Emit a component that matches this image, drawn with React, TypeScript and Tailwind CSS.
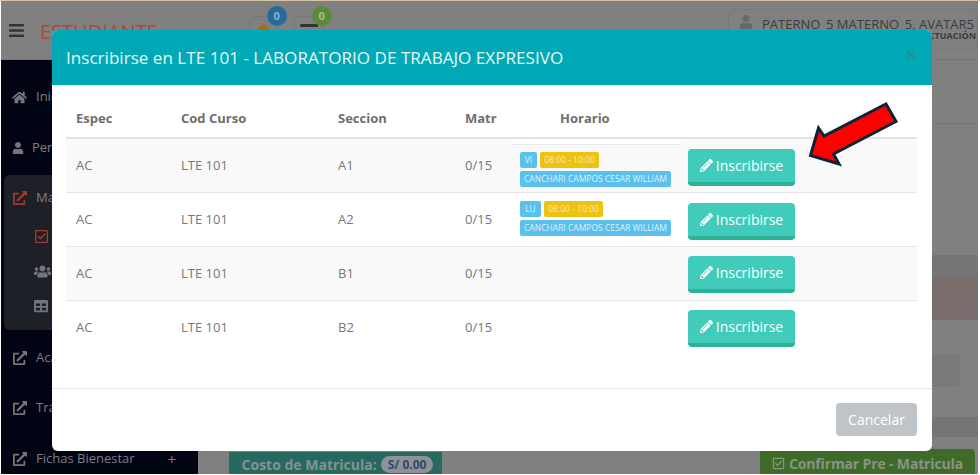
import React from "react";
import {
  FaBars,
  FaBell,
  FaCreditCard,
  FaHome,
  FaUser,
  FaExternalLinkAlt,
  FaRegCheckSquare,
  FaUsers,
  FaTable,
  FaPencilAlt,
} from "react-icons/fa";

const FONT = "font-['Open_Sans',sans-serif]";

function NavItem({ icon, label, right, className }: { icon: React.ReactNode; label: string; right?: string; className?: string }) {
  return (
    <div className={`flex items-center text-[13px] text-[#7d7f86] ${className ?? ""}`}>
      <span className="pl-[11px] flex items-center text-[#74767b]">{icon}</span>
      <span>{label}</span>
      {right && <span className="ml-auto mr-[22px] text-[15px]">{right}</span>}
    </div>
  );
}

function Sidebar() {
  return (
    <aside className="w-[197px] shrink-0 bg-[#000413] pt-[24px] flex flex-col overflow-hidden whitespace-nowrap">
      <NavItem className="h-[26px] gap-[9px]" icon={<FaHome size={15} />} label="Inicio" />
      <NavItem className="h-[26px] mt-[25px] gap-[8px]" icon={<FaUser size={12} />} label="Personal" />
      <div className="mt-[14px] ml-[3px] mr-2 h-[155px] rounded-md bg-[#1d2026] pt-[11px]">
        <NavItem className="h-[24px] -ml-[2px] gap-[9px]" icon={<span className="text-[#a0392f]"><FaExternalLinkAlt size={14} /></span>} label="Matrícula" />
        <div className="mt-[16px] ml-[30px] flex h-[20px] items-center text-[#a0392f]"><FaRegCheckSquare size={15} /></div>
        <div className="mt-[15px] ml-[30px] flex h-[20px] items-center text-[#74767b]"><FaUsers size={17} /></div>
        <div className="mt-[15px] ml-[30px] flex h-[20px] items-center text-[#74767b]"><FaTable size={14} /></div>
      </div>
      <NavItem className="h-[24px] mt-[16px] ml-[1px] gap-[9px]" icon={<FaExternalLinkAlt size={14} />} label="Académico" />
      <NavItem className="h-[24px] mt-[26px] ml-[1px] gap-[9px]" icon={<FaExternalLinkAlt size={14} />} label="Trámites" />
      <NavItem className="h-[24px] mt-[27px] ml-[1px] gap-[9px]" icon={<FaExternalLinkAlt size={14} />} label="Fichas Bienestar" right="+" />
    </aside>
  );
}

function TopBar() {
  return (
    <header className="h-[59px] shrink-0 flex items-start bg-[#808080] border-b border-[#767676]">
      <span className="mt-[21px] ml-[7px] text-[#333] flex"><FaBars size={17} /></span>
      <span className="ml-[15px] mt-[16px] text-[20px] leading-[30px] text-[#b5453b]">ESTUDIANTE</span>
      <div className="ml-[91px] relative mt-[15px] w-[30px] h-[30px] flex justify-center items-center rounded border border-[#787878]">
        <span className="text-[#a56f10] flex"><FaBell size={17} /></span>
        <span className="absolute -top-[11px] left-[17px] w-[20px] h-[20px] rounded-full bg-[#286a9c] text-[#8fb0c9] text-[11px] font-bold flex items-center justify-center">0</span>
      </div>
      <div className="ml-[15px] relative mt-[15px] w-[30px] h-[30px] flex justify-center items-center rounded border border-[#787878]">
        <span className="text-[#333] flex"><FaCreditCard size={18} /></span>
        <span className="absolute -top-[11px] left-[17px] w-[20px] h-[20px] rounded-full bg-[#5c8a3a] text-[#a3bd8e] text-[11px] font-bold flex items-center justify-center">0</span>
      </div>
      <div className="ml-auto mt-[8px] h-[41px] w-[250px] rounded-t-md border border-[#787878] flex pl-[10px] relative whitespace-nowrap">
        <span className="text-[#676767] mt-[5px] flex"><FaUser size={14} /></span>
        <span className="ml-[9px] mt-[6px] text-[13px] leading-[16px] text-[#3c3c3c]">PATERNO_5 MATERNO_5, AVATAR5</span>
        <span className="absolute right-[1px] top-[21px] text-[9px] leading-[10px] font-bold text-[#3c3c3c]">ACTUACIÓN</span>
      </div>
    </header>
  );
}

function Content() {
  return (
    <main className="flex-1 min-w-0 flex flex-col bg-[#808080] overflow-hidden">
      <div className="h-[64px] border-b border-[#767676]" />
      <div className="h-[131px]" />
      <div className="h-[21px] bg-[#747576]" />
      <div className="h-[44px] bg-[#7a6e6c]" />
      <div className="h-[34px]" />
      <div className="h-[33px] mr-[18px] ml-[200px] rounded bg-[#7a7a7a]" />
      <div className="h-[30px]" />
      <div className="h-[20px] bg-[#747576]" />
      <div className="flex-1 flex items-end justify-between pl-[31px] pr-[3px]">
        <div className="h-[22px] w-[213px] pl-[4px] pt-[2px] bg-[#27695f] flex items-center justify-center gap-[4px] text-[14px] font-bold text-[#86918f]">
          <span>Costo de Matricula:</span>
          <span className="rounded-full bg-[#8e9294] text-[#2d4a70] text-[12px] px-[7px] leading-[17px]">S/ 0.00</span>
        </div>
        <div className="h-[25px] w-[215px] pt-[3px] rounded-t bg-[#3f6b2a] flex items-center justify-center gap-[4px] text-[14px] font-bold tracking-[-0.15px] text-[#8a9383]">
          <FaRegCheckSquare size={13} />
          <span>Confirmar Pre - Matricula</span>
        </div>
      </div>
    </main>
  );
}

function Chip({ className, children }: { className: string; children: React.ReactNode }) {
  return (
    <span className={`inline-flex h-[16px] items-center justify-center rounded-[2px] text-[8.5px] text-[#dcf1fa] whitespace-nowrap ${className}`}>
      {children}
    </span>
  );
}

type Row = { sec: string; day?: string; dayW?: string; strip?: boolean };
const rows: Row[] = [
  { sec: "A1", day: "VI", dayW: "w-[17px]", strip: true },
  { sec: "A2", day: "LU", dayW: "w-[21px]" },
  { sec: "B1" },
  { sec: "B2" },
];

function Schedule({ r }: { r: Row }) {
  if (!r.day) return null;
  return (
    <div>
      {r.strip && <div className="h-[6px] bg-white border-b border-[#e8e8e8] ml-[2px] -mr-[3px]" />}
      <div className={`pl-[10px] ${r.strip ? "pt-[7px]" : "pt-[8px]"}`}>
        <div className="flex gap-[3px]">
          <Chip className={`bg-[#5bc0eb] ${r.dayW}`}>{r.day}</Chip>
          <Chip className="w-[59px] bg-[#eec211] text-[#f6e9ae]">08:00 - 10:00</Chip>
        </div>
        <Chip className="mt-px w-[151px] bg-[#5bc0eb]">CANCHARI CAMPOS CESAR WILLIAM</Chip>
      </div>
    </div>
  );
}

function Modal() {
  return (
    <div className="absolute left-[52px] top-[30px] w-[880px] h-[421px] rounded-md bg-white overflow-hidden flex flex-col">
      <div className="h-[55px] shrink-0 bg-[#00a9b5] flex items-center pl-[14px] pr-[15px]">
        <h2 className="text-[17.1px] text-[#e6f6f8] flex-1 whitespace-nowrap">Inscribirse en LTE 101 - LABORATORIO DE TRABAJO EXPRESIVO</h2>
        <span className="text-[20px] font-bold leading-none text-[#2b8d99] mb-[6px]">×</span>
      </div>
      <div className="h-[303px] shrink-0 px-[14px] pt-[15px]">
        <table className="w-[851px] table-fixed border-collapse text-[13px] text-[#777]">
          <colgroup>
            <col className="w-[105px]" />
            <col className="w-[157px]" />
            <col className="w-[127px]" />
            <col className="w-[55px]" />
            <col className="w-[168px]" />
            <col className="w-[239px]" />
          </colgroup>
          <thead>
            <tr className="h-[38px] border-b-2 border-[#e2e2e2] text-left text-[#6e6e6e] font-bold">
              <th className="pl-[10px]">Espec</th>
              <th className="pl-[10px]">Cod Curso</th>
              <th className="pl-[10px]">Seccion</th>
              <th className="pl-[10px]">Matr</th>
              <th className="pl-[50px]">Horario</th>
              <th />
            </tr>
          </thead>
          <tbody>
            {rows.map((r, i) => (
              <tr key={r.sec} className={`h-[54px] ${i % 2 === 0 ? "bg-[#f9f9f9]" : "bg-white"} ${i < 3 ? "border-b border-[#e6e6e6]" : ""}`}>
                <td className="pl-[10px]">AC</td>
                <td className="pl-[10px]">LTE 101</td>
                <td className="pl-[10px]">{r.sec}</td>
                <td className="pl-[10px]">0/15</td>
                <td className="p-0 align-top"><Schedule r={r} /></td>
                <td className={`pl-[10px] pb-[6px] align-top ${i < 2 ? "pt-[10px]" : "pt-[9px]"}`}>
                  <button className="w-[107px] h-[37px] rounded border-b-4 border-[#2bb398] bg-[#40cbba] text-[14px] text-white flex items-center justify-center gap-[3px]">
                    <FaPencilAlt size={13} />
                    <span>Inscribirse</span>
                  </button>
                </td>
              </tr>
            ))}
          </tbody>
        </table>
      </div>
      <div className="flex-1 border-t border-[#e8e8e8] flex justify-end items-start pt-[14px] pr-[15px]">
        <button className="w-[81px] h-[33px] rounded bg-[#bfc4c9] text-[14px] text-white">Cancelar</button>
      </div>
    </div>
  );
}

function Arrow() {
  return (
    <svg className="absolute left-[800px] top-[95px]" width="105" height="78" viewBox="0 0 105 78">
      <polygon
        points="10.5,60.5 18.5,33 24,41 86,9 96,26.5 33.5,59 39,69"
        fill="#ff0000"
        stroke="#0d2436"
        strokeWidth="3"
        strokeLinejoin="miter"
      />
    </svg>
  );
}

export default function App() {
  return (
    <div className={`relative w-[980px] h-[475px] overflow-hidden bg-white ${FONT}`}>
      <div className="h-px bg-[#d9c3a5]" />
      <div className="h-[473px] ml-px mr-[2px] flex flex-col overflow-hidden">
        <TopBar />
        <div className="flex-1 flex min-h-0">
          <Sidebar />
          <Content />
        </div>
      </div>
      <Modal />
      <Arrow />
    </div>
  );
}
